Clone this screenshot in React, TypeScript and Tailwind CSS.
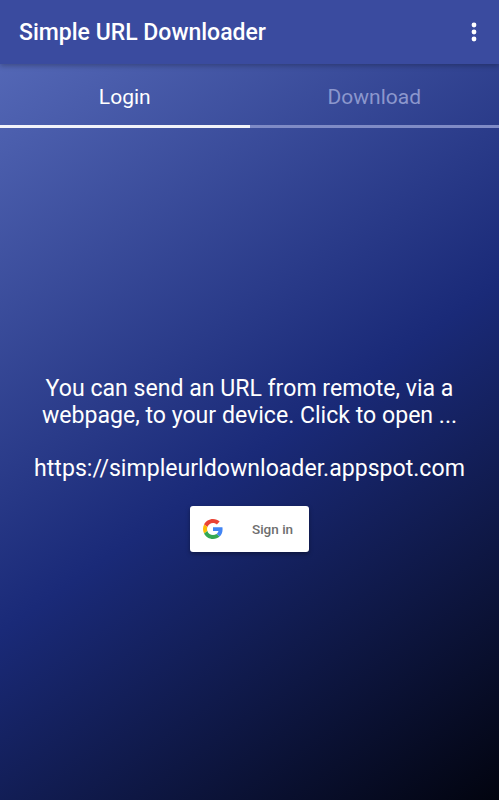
export default function App() {
  return (
    <div className="w-[499px] h-[800px] flex flex-col overflow-hidden font-['Roboto',sans-serif] text-white bg-[linear-gradient(145deg,#5a6ebd_0%,#1a2a78_55%,#02040f_100%)]">
      <header className="h-16 shrink-0 bg-[#3a4b9f] flex items-center justify-between pl-[19px] pr-[17px] shadow-[0_2px_5px_rgba(0,0,0,0.25)] z-10">
        <h1 className="text-[23px] font-medium leading-none">Simple URL Downloader</h1>
        <svg width="16" height="24" viewBox="0 0 16 24" fill="white">
          <circle cx="8" cy="5" r="2.4" />
          <circle cx="8" cy="12" r="2.4" />
          <circle cx="8" cy="19" r="2.4" />
        </svg>
      </header>
      <nav className="h-16 shrink-0 flex text-[21px]">
        <div className="flex-1 flex items-center justify-center pt-[6px] border-b-[3px] border-[#f2f3fa] text-white">Login</div>
        <div className="flex-1 flex items-center justify-center pt-[6px] border-b-[3px] border-[#7f8bc6] text-[#8c97cd]">Download</div>
      </nav>
      <main className="flex-1 flex flex-col items-center pt-[247px]">
        <p className="text-[23.1px] leading-[27px] text-center whitespace-nowrap">
          You can send an URL from remote, via a<br />
          webpage, to your device. Click to open ...
        </p>
        <p className="text-[23.1px] leading-[27px] text-center mt-[26px] whitespace-nowrap">https://simpleurldownloader.appspot.com</p>
        <button className="mt-[24px] w-[119px] h-[46px] bg-white rounded-[3px] shadow-[0_2px_4px_rgba(0,0,0,0.35)] flex items-center pl-[13px] text-[#6e6e6e] text-[13.5px] font-medium">
          <svg width="20" height="20" viewBox="0 0 48 48">
            <path fill="#EA4335" d="M24 9.5c3.54 0 6.71 1.22 9.21 3.6l6.85-6.85C35.9 2.38 30.47 0 24 0 14.62 0 6.51 5.38 2.56 13.22l7.98 6.19C12.43 13.72 17.74 9.5 24 9.5z" />
            <path fill="#4285F4" d="M46.98 24.55c0-1.57-.15-3.09-.38-4.55H24v9.02h12.94c-.58 2.96-2.26 5.48-4.78 7.18l7.73 6c4.51-4.18 7.09-10.36 7.09-17.65z" />
            <path fill="#FBBC05" d="M10.53 28.59c-.48-1.45-.76-2.99-.76-4.59s.27-3.14.76-4.59l-7.98-6.19C.92 16.46 0 20.12 0 24c0 3.88.92 7.54 2.56 10.78l7.97-6.19z" />
            <path fill="#34A853" d="M24 48c6.48 0 11.93-2.13 15.89-5.81l-7.73-6c-2.15 1.45-4.92 2.3-8.16 2.3-6.26 0-11.57-4.22-13.47-9.91l-7.98 6.19C6.51 42.62 14.62 48 24 48z" />
          </svg>
          <span className="ml-[29px]">Sign in</span>
        </button>
      </main>
    </div>
  );
}
